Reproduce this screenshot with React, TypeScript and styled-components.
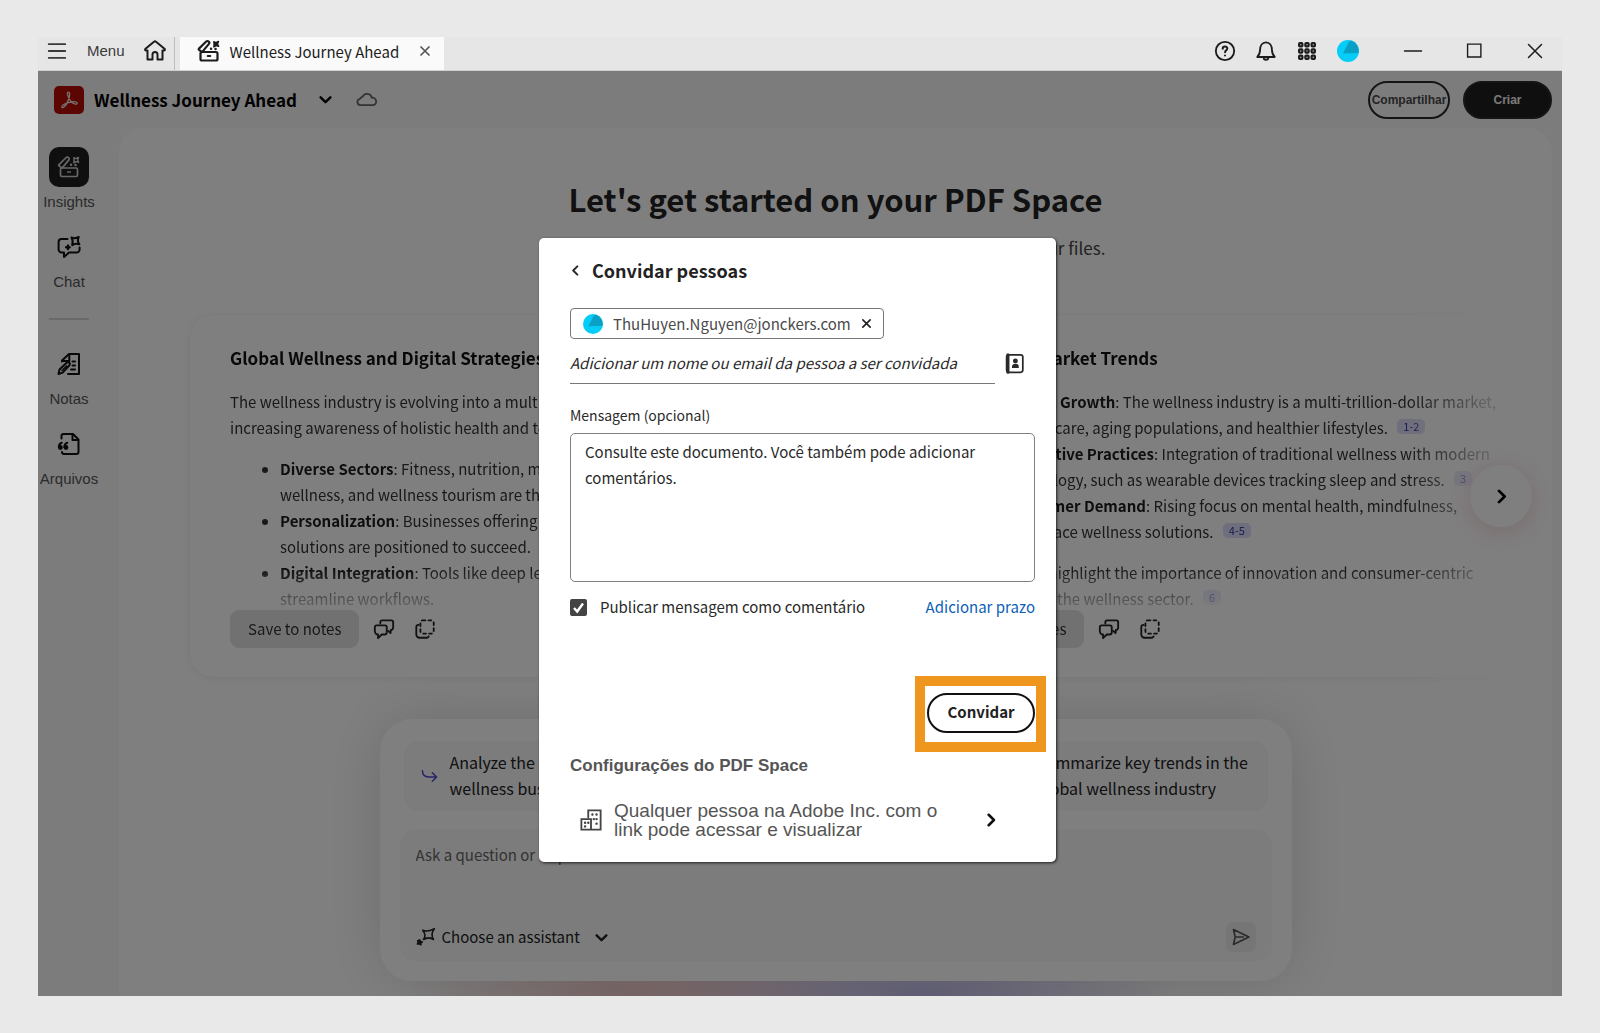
import React, { useState } from 'react';
import styled, { createGlobalStyle, css } from 'styled-components';

const clean = `"Noto Sans CJK JP", "Noto Sans", sans-serif`;
const plain = `"Liberation Sans", Arial, sans-serif`;

const GlobalStyle = createGlobalStyle`
  *, *::before, *::after { box-sizing: border-box; }
  body { margin: 0; background: #e9e9e9; font-family: ${clean}; color: #222; }
  button, input, textarea { font: inherit; color: inherit; }
  h1, h2, p, ul { margin: 0; padding: 0; }
`;

/* ---------- window ---------- */

const Desktop = styled.div`
  min-height: 100vh;
  display: flex;
  padding: 37px 38px;
`;

const Window = styled.div`
  flex: 1;
  min-width: 0;
  display: flex;
  flex-direction: column;
`;

const TitleBar = styled.header`
  display: flex;
  align-items: stretch;
  height: 34px;
  background: #e6e6e6;
  border-bottom: 1px solid #d0d0d0;
  color: #1c1c1c;
`;

const BareButton = styled.button`
  display: inline-flex;
  align-items: center;
  justify-content: center;
  padding: 0;
  border: 0;
  background: none;
  cursor: pointer;
`;

const MenuGroup = styled.div`
  display: flex;
  align-items: center;
  padding: 0 7px 5px 8px;
  border-right: 1px solid #bdbdbd;
  margin-right: 5px;
`;

const MenuButton = styled(BareButton)`
  gap: 19px;
  margin-right: 18px;
  font: 15px/20px ${plain};
  color: #3a3a3a;
`;

const Tab = styled.div`
  display: flex;
  align-items: center;
  width: 264px;
  padding: 0 13px 6px 17px;
  background: #fafafa;
  font-size: 15px;
  line-height: 24px;
`;

const TabTitle = styled.span`
  flex: 1;
  padding: 3px 0 0 9px;
  white-space: nowrap;
`;

const TitleTools = styled.div`
  display: flex;
  align-items: center;
  gap: 17px;
  margin-left: auto;
  padding: 0 15px 6px 0;
`;

const WindowControls = styled.div`
  display: flex;
  gap: 37px;
  margin-left: 24px;
`;

const ToolButton = styled(BareButton)`
  width: 24px;
  height: 24px;
`;

/* ---------- app ---------- */

const Stage = styled.div`
  position: relative;
  flex: 1;
  display: flex;
`;

const Shell = styled.div`
  flex: 1;
  min-width: 0;
  display: grid;
  grid-template: 57px 1fr / 81px minmax(0, 1fr);
  background: #f8f8f8;
`;

const AppBar = styled.div`
  grid-column: 1 / -1;
  display: flex;
  align-items: center;
  padding: 0 10px 0 16px;
`;

const Logo = styled.div`
  display: grid;
  place-items: center;
  width: 30px;
  height: 28px;
  margin-right: 10px;
  border-radius: 5px;
  background: #b60c06;
`;

const SpaceName = styled.button`
  display: flex;
  align-items: center;
  gap: 22px;
  padding: 0;
  border: 0;
  background: none;
  font-size: 17px;
  line-height: 24px;
  font-weight: 700;
  color: #000;
`;

const CloudMark = styled.span`
  display: flex;
  margin-left: 24px;
  color: #666;
`;

const Actions = styled.div`
  display: flex;
  gap: 13px;
  margin-left: auto;
`;

const PillButton = styled.button<{ $solid?: boolean }>`
  display: flex;
  align-items: center;
  justify-content: center;
  width: ${p => (p.$solid ? 89 : 82)}px;
  height: 38px;
  padding: 0;
  border: 2px solid #2a2a2a;
  border-radius: 19px;
  background: ${p => (p.$solid ? '#1e1e1e' : 'transparent')};
  color: ${p => (p.$solid ? '#f4f4f4' : '#4a4a4a')};
  font: 700 12px/16px ${plain};
  white-space: nowrap;
`;

const Rail = styled.nav`
  display: flex;
  flex-direction: column;
  align-items: center;
  gap: 16px;
  width: 62px;
  padding-top: 19px;
`;

const RailItem = styled.button`
  display: flex;
  flex-direction: column;
  align-items: center;
  gap: 6px;
  padding: 0;
  border: 0;
  background: none;
  font: 15px/18px ${plain};
  color: #555;
`;

const RailIcon = styled.span<{ $active?: boolean }>`
  display: grid;
  place-items: center;
  width: 40px;
  height: 40px;
  border-radius: 10px;
  color: #111;
  ${p => p.$active && css`background: #1e1e1e; color: #d0d0d0;`}
`;

const RailDivider = styled.hr`
  width: 40px;
  height: 2px;
  margin: 11px 0 8px;
  border: 0;
  background: #d4d4d4;
`;

const Panel = styled.main`
  display: flex;
  flex-direction: column;
  margin-right: 10px;
  padding: 47px 32px 15px 71px;
  border-radius: 24px 24px 0 0;
  background:
    radial-gradient(ellipse 230px 70px at 36% 100%, rgba(225, 60, 60, 0.26), transparent),
    radial-gradient(ellipse 260px 70px at 56% 100%, rgba(70, 50, 210, 0.3), transparent),
    #fff;
  overflow: hidden;
`;

const Hero = styled.div`
  padding-right: 39px;
  text-align: center;
  color: #222;
`;

const HeroTitle = styled.h1`
  font-size: 31px;
  line-height: 48px;
  font-weight: 700;
`;

const HeroText = styled.p`
  padding-top: 12px;
  font-size: 17px;
  line-height: 26px;
  color: #444;
`;

/* ---------- insight cards ---------- */

const Carousel = styled.section`
  position: relative;
  margin-top: 47px;
`;

const Track = styled.div`
  display: flex;
  gap: 24px;
  margin: -10px;
  padding: 17px 10px 10px;
  overflow: hidden;
  mask-image: linear-gradient(to right, #000 91%, transparent 99%);
`;

const Card = styled.article`
  flex: none;
  width: 701px;
  height: 362px;
  padding: 28px 40px 0;
  border-radius: 24px;
  background: #fff;
  box-shadow: 0 1px 8px rgba(0, 0, 0, 0.07);
`;

const CardTitle = styled.h2`
  font-size: 17px;
  line-height: 30px;
  font-weight: 700;
  color: #111;
`;

const CardBody = styled.div`
  display: flex;
  flex-direction: column;
  gap: 15px;
  padding-top: 16px;
  font-size: 15px;
  line-height: 26px;
  color: #333;
  white-space: nowrap;
  mask-image: linear-gradient(to bottom, #000 82%, rgba(0, 0, 0, 0.2) 100%);

  ul { padding-left: 50px; }
  b { color: #1c1c1c; }
`;

const Cite = styled.a`
  display: inline-block;
  margin-left: 6px;
  padding: 0 6px;
  border-radius: 5px;
  background: #dcdcf8;
  color: #3a38a8;
  font-size: 11px;
  line-height: 15px;
  text-decoration: none;
  vertical-align: 3px;
`;

const CardActions = styled.div`
  display: flex;
  align-items: center;
  gap: 19px;
  margin-top: -2px;
`;

const SaveButton = styled.button`
  height: 38px;
  margin-right: -5px;
  padding: 0 18px 1px;
  border: 0;
  border-radius: 9px;
  background: #e2e2e2;
  font-size: 15px;
  line-height: 24px;
  color: #333;
`;

const NextButton = styled.button`
  position: absolute;
  right: -12px;
  top: 157px;
  display: grid;
  place-items: center;
  width: 62px;
  height: 62px;
  padding: 0;
  border: 0;
  border-radius: 50%;
  background: #fff;
  color: #000;
  box-shadow: 0 4px 24px rgba(190, 40, 60, 0.2);
`;

/* ---------- prompt area ---------- */

const Composer = styled.section`
  align-self: center;
  display: flex;
  flex-direction: column;
  gap: 18px;
  width: 912px;
  margin: 42px 39px 0 0;
  padding: 22px 20px 20px;
  border-radius: 32px;
  background: #fff;
  box-shadow: 0 0 60px rgba(0, 0, 0, 0.14);
`;

const Suggestions = styled.div`
  display: grid;
  grid-template-columns: repeat(3, 1fr);
  gap: 16px;
  padding: 0 4px;
`;

const Suggestion = styled.button`
  display: flex;
  align-items: center;
  gap: 12px;
  height: 70px;
  padding: 0 0 2px 17px;
  border: 0;
  border-radius: 14px;
  background: #f8f8f8;
  font-size: 16px;
  line-height: 26px;
  text-align: left;
  white-space: nowrap;
  color: #222;

  svg { flex: none; color: #4a48d0; }
`;

const AskBox = styled.div`
  display: flex;
  flex-direction: column;
  justify-content: space-between;
  height: 132px;
  padding: 11px 16px 9px;
  border-radius: 16px;
  background: #f8f8f8;
`;

const AskInput = styled.input`
  width: 100%;
  height: 28px;
  padding: 0;
  border: 0;
  background: none;
  font-size: 15px;
  outline: none;
  &::placeholder { color: #666; opacity: 1; }
`;

const AskFooter = styled.div`
  display: flex;
  align-items: center;
  justify-content: space-between;
`;

const AssistantButton = styled(BareButton)`
  gap: 6px;
  font-size: 15px;
  line-height: 24px;
`;

const AssistantName = styled.span`
  padding-right: 9px;
`;

const SendButton = styled(BareButton)`
  width: 30px;
  height: 30px;
  border-radius: 7px;
  background: #ececec;
  color: #555;
`;

/* ---------- dialog ---------- */

const Backdrop = styled.div`
  position: absolute;
  inset: 0;
  display: flex;
  align-items: flex-start;
  justify-content: center;
  padding: 167px 5px 0 0;
  background: rgba(0, 0, 0, 0.5);
`;

const Dialog = styled.div`
  display: flex;
  flex-direction: column;
  width: 517px;
  padding: 19px 21px 23px 31px;
  border-radius: 5px;
  background: #fff;
  box-shadow: 1px 1px 3px rgba(0, 0, 0, 0.75);
  color: #2a2a2a;
`;

const DialogHead = styled.div`
  display: flex;
  align-items: center;
  gap: 11px;
  margin-bottom: 25px;
`;

const DialogTitle = styled.h2`
  font-size: 18px;
  line-height: 26px;
  font-weight: 700;
  color: #222;
`;

const PersonChip = styled.div`
  align-self: flex-start;
  display: flex;
  align-items: center;
  gap: 10px;
  height: 31px;
  padding: 0 11px 0 12px;
  border: 1px solid #777;
  border-radius: 4px;
  font-size: 15px;
  line-height: 24px;
  color: #4a4a4a;
`;

const RemoveButton = styled(BareButton)`
  color: #222;
`;

const NameRow = styled.div`
  display: flex;
  align-items: center;
  justify-content: space-between;
  padding-right: 10px;
  margin-bottom: 20px;
`;

const NameInput = styled.input`
  width: 425px;
  height: 45px;
  padding: 3px 0 0;
  border: 0;
  border-bottom: 1px solid #777;
  font-size: 15px;
  font-style: italic;
  outline: none;
  &::placeholder { color: #2a2a2a; opacity: 1; }
`;

const ContactsButton = styled(BareButton)`
  padding-top: 4px;
`;

const MessageLabel = styled.label`
  margin-bottom: 7px;
  font-size: 14px;
  line-height: 22px;
`;

const Message = styled.textarea`
  display: block;
  width: 100%;
  height: 149px;
  padding: 5px 14px;
  border: 1px solid #808080;
  border-radius: 5px;
  font-size: 15px;
  line-height: 26px;
  resize: none;
  outline: none;
`;

const OptionRow = styled.div`
  display: flex;
  align-items: center;
  justify-content: space-between;
  margin-top: 12px;
  font-size: 15px;
  line-height: 26px;
`;

const CheckLabel = styled.label`
  display: flex;
  align-items: center;
  gap: 13px;
`;

const CheckBox = styled.input`
  appearance: none;
  width: 17px;
  height: 17px;
  margin: 0;
  border: 2px solid #444;
  border-radius: 2px;
  &:checked {
    background: #444 url("data:image/svg+xml,%3Csvg xmlns='http://www.w3.org/2000/svg' viewBox='0 0 13 13'%3E%3Cpath d='M2 7l3.2 3.5L11 2.5' fill='none' stroke='white' stroke-width='2.4'/%3E%3C/svg%3E") center / 13px no-repeat;
  }
`;

const DeadlineLink = styled.a`
  color: #0d5fb8;
  text-decoration: none;
`;

const InviteSpot = styled.div`
  position: relative;
  align-self: flex-end;
  margin-top: 73px;

  &::after {
    content: '';
    position: absolute;
    inset: -17px -11px -19px -12px;
    border: 10px solid #ee961e;
    pointer-events: none;
  }
`;

const InviteButton = styled.button`
  display: block;
  width: 108px;
  height: 40px;
  padding: 0 0 2px;
  border: 2px solid #111;
  border-radius: 20px;
  background: #fff;
  font-size: 15px;
  line-height: 24px;
  font-weight: 700;
  color: #222;
`;

const SettingsTitle = styled.h2`
  margin-top: 23px;
  font: 700 17px/20px ${plain};
  color: #555;
`;

const AccessRow = styled.button`
  display: flex;
  align-items: center;
  gap: 12px;
  margin-top: 25px;
  padding: 0 37px 0 10px;
  border: 0;
  background: none;
  color: #111;
  text-align: left;
`;

const AccessText = styled.span`
  flex: 1;
  font: 19px/19px ${plain};
  color: #555;
`;

/* ---------- icons ---------- */

type IconProps = { size?: number; w?: number; children?: React.ReactNode };

const Icon = ({ size = 24, w = 2, children }: IconProps) => (
  <svg width={size} height={size} viewBox="0 0 24 24" fill="none" stroke="currentColor" strokeWidth={w} strokeLinecap="round" strokeLinejoin="round" aria-hidden="true">
    {children}
  </svg>
);

const Chevron = ({ dir, size = 14 }: { dir: 'left' | 'right' | 'down'; size?: number }) => (
  <Icon size={size} w={4.4}>
    <path d={{ left: 'M16 3l-9 9 9 9', right: 'M8 3l9 9-9 9', down: 'M3 8l9 9 9-9' }[dir]} />
  </Icon>
);

const InsightsIcon = ({ bold }: { bold?: boolean }) => (
  <Icon w={bold ? 2.2 : 1.7}>
    <rect x="3.500" y="13" width="17" height="8.500" rx="1.500" />
    <path d="M10.800 17h2.400M4.500 12.600L2 10.800c-.4-.4-.4-.8 0-1.200L9.200 2.500c1.700-1.300 4 .6 2.700 2.400L5.500 12.600" />
    <path d="M16.800 2.600l2 1 2.700-1.200-1 2.600 1.200 2.400-2.700-.8-2.200 1.300.3-2.500z" fill={bold ? 'currentColor' : 'none'} strokeWidth="1.400" />
    <path d="M14 9.700h.1M18.500 10h.1" strokeWidth="2.400" />
  </Icon>
);

const ChatIcon = () => (
  <Icon w={2}>
    <path d="M10.500 4H4.600A3 3 0 0 0 1.600 7v7.500a3 3 0 0 0 3 3H7v4.600l5-4.600h7.600a3 3 0 0 0 3-3V12.500" />
    <path d="M14.500 2.500q3 1.600 7.300-.5-2 3.800.6 7.300-3.800-1.400-7.200.9 1.400-3.800-.7-7.700z" />
    <path d="M11 10.300l.4 1.500 1.500.4-1.500.6-.4 1.500-.6-1.500-1.500-.6 1.500-.4z" fill="currentColor" />
  </Icon>
);

const NotesIcon = () => (
  <Icon w={2}>
    <path d="M5 9.500V8.500L12 2h10v20H11" />
    <path d="M12.300 2.500V9H6" />
    <path d="M15.500 9.500H18M15.500 13.500H18M14 17.500h4" />
    <path d="M1.500 22l1-4.400 7.400-7c1.900-1.400 4 .8 2.500 2.600L5.600 20.600z" />
    <path d="M5 18.500l4.500-4.500" strokeWidth="1.500" />
  </Icon>
);

const FilesIcon = () => (
  <Icon w={2}>
    <path d="M4.500 6.500V4A2 2 0 0 1 6.500 2H16l5.500 5.500V20a2 2 0 0 1-2 2H7a2 2 0 0 1-2-2" />
    <path d="M15.500 2.500V8H21" />
    <path d="M4.800 10.800c-2 .6-3 2.200-3 4.500M10.300 10.800c-2 .6-3 2.200-3 4.500" />
    <circle cx="3.400" cy="15.500" r="1.400" fill="currentColor" />
    <circle cx="9" cy="15.500" r="1.400" fill="currentColor" />
  </Icon>
);

const RepliesIcon = () => (
  <Icon size={22} w={2}>
    <path d="M8 6V4.500A2 2 0 0 1 10 2.500h10A2 2 0 0 1 22 4.500v6a2.500 2.500 0 0 1-2.500 2.500l-.4 3.500L16.500 14" />
    <path d="M4 8h9a2 2 0 0 1 2 2v5.500a2.500 2.500 0 0 1-2.500 2.500H9.500L5.500 22v-4A3.500 3.500 0 0 1 2 14.500V10a2 2 0 0 1 2-2z" />
  </Icon>
);

const CopyIcon = () => (
  <Icon size={22} w={2}>
    <rect x="7" y="2.500" width="14.500" height="14.500" rx="2.500" strokeDasharray="3 3.400" />
    <path d="M5 7.500A2.500 2.500 0 0 0 2.500 10V18A3.500 3.500 0 0 0 6 21.500h7.500A2.500 2.500 0 0 0 16 20" />
  </Icon>
);

const ReplyArrow = () => (
  <Icon size={17}><path d="M2 5c0 6 4 9 9 9h11M16 8l6 6-6 6" /></Icon>
);

const Avatar = ({ size }: { size: number }) => (
  <svg width={size} height={size} viewBox="0 0 22 22" aria-hidden="true">
    <circle cx="11" cy="11" r="11" fill="#06cdf8" />
    <path d="M11.500 2.500L6 13.500l15.500-.5A11 11 0 0 0 14 0.500z" fill="#0a9fc4" />
  </svg>
);

const SaveRow = () => (
  <CardActions>
    <SaveButton>Save to notes</SaveButton>
    <BareButton aria-label="Comment"><RepliesIcon /></BareButton>
    <BareButton aria-label="Copy"><CopyIcon /></BareButton>
  </CardActions>
);

/* ---------- page ---------- */

const InviteDialog = () => {
  const [message, setMessage] = useState('Consulte este documento. Você também pode adicionar comentários.');
  const [publish, setPublish] = useState(true);
  return (
    <Dialog role="dialog" aria-modal="true" aria-labelledby="invite-title">
      <DialogHead>
        <BareButton aria-label="Voltar"><Chevron dir="left" size={11} /></BareButton>
        <DialogTitle id="invite-title">Convidar pessoas</DialogTitle>
      </DialogHead>
      <PersonChip>
        <Avatar size={20} />
        ThuHuyen.Nguyen@jonckers.com
        <RemoveButton aria-label="Remover"><Icon size={11} w={3.600}><path d="M4 4l16 16M20 4L4 20" /></Icon></RemoveButton>
      </PersonChip>
      <NameRow>
        <NameInput aria-label="Nome ou email" placeholder="Adicionar um nome ou email da pessoa a ser convidada" />
        <ContactsButton aria-label="Contatos">
          <Icon size={21}>
            <rect x="3" y="2" width="18.500" height="20" rx="2.500" />
            <path d="M4.500 2v20" strokeWidth="3.500" />
            <circle cx="13" cy="9" r="1.800" fill="currentColor" />
            <path d="M10 16.200c0-4 6-4 6 0z" fill="currentColor" />
          </Icon>
        </ContactsButton>
      </NameRow>
      <MessageLabel htmlFor="message">Mensagem (opcional)</MessageLabel>
      <Message id="message" value={message} onChange={e => setMessage(e.target.value)} />
      <OptionRow>
        <CheckLabel>
          <CheckBox type="checkbox" checked={publish} onChange={e => setPublish(e.target.checked)} />
          Publicar mensagem como comentário
        </CheckLabel>
        <DeadlineLink href="#prazo">Adicionar prazo</DeadlineLink>
      </OptionRow>
      <InviteSpot>
        <InviteButton>Convidar</InviteButton>
      </InviteSpot>
      <SettingsTitle>Configurações do PDF Space</SettingsTitle>
      <AccessRow>
        <Icon size={22}>
          <path d="M9 9V1.500h13.500v21h-21V11H12v11" stroke="#444" strokeLinejoin="miter" />
          <path d="M13.500 6h.1M18 6h.1M18 11h.1M18 16h.1M5.500 15h.1M9 15h.1M5.500 19h.1M15 11h.1" stroke="#444" strokeWidth="2.600" />
        </Icon>
        <AccessText>Qualquer pessoa na Adobe Inc. com o<br />link pode acessar e visualizar</AccessText>
        <Chevron dir="right" />
      </AccessRow>
    </Dialog>
  );
};

const App = () => (
  <>
    <GlobalStyle />
    <Desktop>
      <Window>
        <TitleBar>
          <MenuGroup>
            <MenuButton>
              <Icon size={22}><path d="M3 4.500h18M3 12h18M3 19.500h18" /></Icon>
              Menu
            </MenuButton>
            <BareButton aria-label="Home">
              <Icon><path d="M4.500 11.500H3.200c-1.200 0-1.400-1-.7-1.700L11 2.700a1.600 1.600 0 0 1 2 0l8.500 7.100c.7.700.5 1.700-.7 1.700h-1.300M4.500 11.500V20.500h5v-5a2.500 2.500 0 0 1 5 0v5h5v-9" /></Icon>
            </BareButton>
          </MenuGroup>
          <Tab>
            <InsightsIcon bold />
            <TabTitle>Wellness Journey Ahead</TabTitle>
            <BareButton aria-label="Close tab"><Icon size={12} w={3.400}><path d="M4 4l16 16M20 4L4 20" stroke="#555" /></Icon></BareButton>
          </Tab>
          <TitleTools>
            <ToolButton aria-label="Help">
              <Icon size={22}>
                <circle cx="12" cy="12" r="10" />
                <path d="M9.500 9.500c0-3.300 5-3.300 5-.2 0 1.800-2.400 2-2.400 4M12 16.800v.1" strokeWidth="2.200" />
              </Icon>
            </ToolButton>
            <ToolButton aria-label="Notifications">
              <Icon size={22}><path d="M2.500 18.500c2-2 3-3.500 3-7.500C5.500 6 8 2.500 12 2.500s6.500 3.500 6.500 8.500c0 4 1 5.500 3 7.500zM9.500 19a2.500 2.500 0 0 0 5 0" /></Icon>
            </ToolButton>
            <ToolButton aria-label="Apps">
              <Icon size={20} w={2.600}>
                {[2.500, 10, 17.500].map(y => [2.500, 10, 17.500].map(x => <rect key={`${x}-${y}`} x={x} y={y} width="4" height="4" rx="1" />))}
              </Icon>
            </ToolButton>
            <ToolButton aria-label="Account"><Avatar size={22} /></ToolButton>
            <WindowControls>
              <ToolButton aria-label="Minimize"><Icon w={1.500}><path d="M3.500 12h17" /></Icon></ToolButton>
              <ToolButton aria-label="Maximize"><Icon size={22} w={1.500}><path d="M5 4.500h14.500v14H5z" strokeLinejoin="miter" /></Icon></ToolButton>
              <ToolButton aria-label="Close"><Icon w={1.500}><path d="M5.500 5.500l13 13M18.500 5.500l-13 13" /></Icon></ToolButton>
            </WindowControls>
          </TitleTools>
        </TitleBar>

        <Stage>
          <Shell>
            <AppBar>
              <Logo>
                <svg width="20" height="20" viewBox="0 0 24 24" fill="none" stroke="#f3dedd" strokeWidth="1.600" aria-hidden="true">
                  <path d="M11.300 2.500c-1.800 0-1.500 3 .2 6.500 1.700 3.600 5 7.500 8.200 8 2.800.4 2.900-2.200-.2-2.700-4.500-.7-10 .9-13.800 3.100-3.500 2-2.600 4.600-.5 3.400 2.800-1.600 6-8 7.200-13 .8-3.300.3-5.300-1.100-5.300z" />
                </svg>
              </Logo>
              <SpaceName>Wellness Journey Ahead<Chevron dir="down" size={13} /></SpaceName>
              <CloudMark><Icon size={21}><path d="M5 18.500a3.700 3.700 0 0 1-.5-7.300 4 4 0 0 1 3-2.200A5.500 5.500 0 0 1 18 10a4.300 4.300 0 0 1 1.500 8.500z" /></Icon></CloudMark>
              <Actions>
                <PillButton>Compartilhar</PillButton>
                <PillButton $solid>Criar</PillButton>
              </Actions>
            </AppBar>

            <Rail>
              <RailItem><RailIcon $active><InsightsIcon /></RailIcon>Insights</RailItem>
              <RailItem><RailIcon><ChatIcon /></RailIcon>Chat</RailItem>
              <RailDivider />
              <RailItem><RailIcon><NotesIcon /></RailIcon>Notas</RailItem>
              <RailItem><RailIcon><FilesIcon /></RailIcon>Arquivos</RailItem>
            </Rail>

            <Panel>
              <Hero>
                <HeroTitle>Let's get started on your PDF Space</HeroTitle>
                <HeroText>Explore the insights, or ask a question to learn more about your files.</HeroText>
              </Hero>

              <Carousel>
                <Track>
                  <Card>
                    <CardTitle>Global Wellness and Digital Strategies</CardTitle>
                    <CardBody>
                      <p>The wellness industry is evolving into a multi-trillion-dollar market driven<br />increasing awareness of holistic health and technology.</p>
                      <ul>
                        <li><b>Diverse Sectors</b>: Fitness, nutrition, mental health, workplace<br />wellness, and wellness tourism are thriving.</li>
                        <li><b>Personalization</b>: Businesses offering tailored wellness<br />solutions are positioned to succeed.</li>
                        <li><b>Digital Integration</b>: Tools like deep learning help<br />streamline workflows.</li>
                      </ul>
                    </CardBody>
                    <SaveRow />
                  </Card>
                  <Card>
                    <CardTitle>Wellness: Market Trends</CardTitle>
                    <CardBody>
                      <ul>
                        <li><b>Market Growth</b>: The wellness industry is a multi-trillion-dollar market,<br />by self-care, aging populations, and healthier lifestyles. <Cite href="#1">1-2</Cite></li>
                        <li><b>Innovative Practices</b>: Integration of traditional wellness with modern<br />technology, such as wearable devices tracking sleep and stress. <Cite href="#3">3</Cite></li>
                        <li><b>Consumer Demand</b>: Rising focus on mental health, mindfulness,<br />workplace wellness solutions. <Cite href="#4">4-5</Cite></li>
                      </ul>
                      <p>These trends highlight the importance of innovation and consumer-centric<br />approaches in the wellness sector. <Cite href="#6">6</Cite></p>
                    </CardBody>
                    <SaveRow />
                  </Card>
                </Track>
                <NextButton aria-label="Next"><Chevron dir="right" size={15} /></NextButton>
              </Carousel>

              <Composer>
                <Suggestions>
                  <Suggestion><ReplyArrow />Analyze the impact of<br />wellness businesses</Suggestion>
                  <Suggestion><ReplyArrow />Compare the leading<br />digital strategies</Suggestion>
                  <Suggestion><ReplyArrow />Summarize key trends in the<br />global wellness industry</Suggestion>
                </Suggestions>
                <AskBox>
                  <AskInput aria-label="Ask a question" placeholder="Ask a question or request a task" />
                  <AskFooter>
                    <AssistantButton>
                      <Icon size={20} w={1.900}>
                        <path d="M8 4q6 2.500 14-2-5 6.500-1 13-5.500-4-12 0 4-5-1-11z" />
                        <path d="M4.500 15.500l.8 2 2.200.5-1.800 1.200.2 2.300L4 20l-2.300.4 1-2.200-.7-1.800z" fill="currentColor" />
                      </Icon>
                      <AssistantName>Choose an assistant</AssistantName>
                      <Chevron dir="down" size={13} />
                    </AssistantButton>
                    <SendButton aria-label="Send"><Icon size={20}><path d="M3 3l18.500 9L3 21l2-9zM5 12h10" /></Icon></SendButton>
                  </AskFooter>
                </AskBox>
              </Composer>
            </Panel>
          </Shell>

          <Backdrop>
            <InviteDialog />
          </Backdrop>
        </Stage>
      </Window>
    </Desktop>
  </>
);

export default App;
